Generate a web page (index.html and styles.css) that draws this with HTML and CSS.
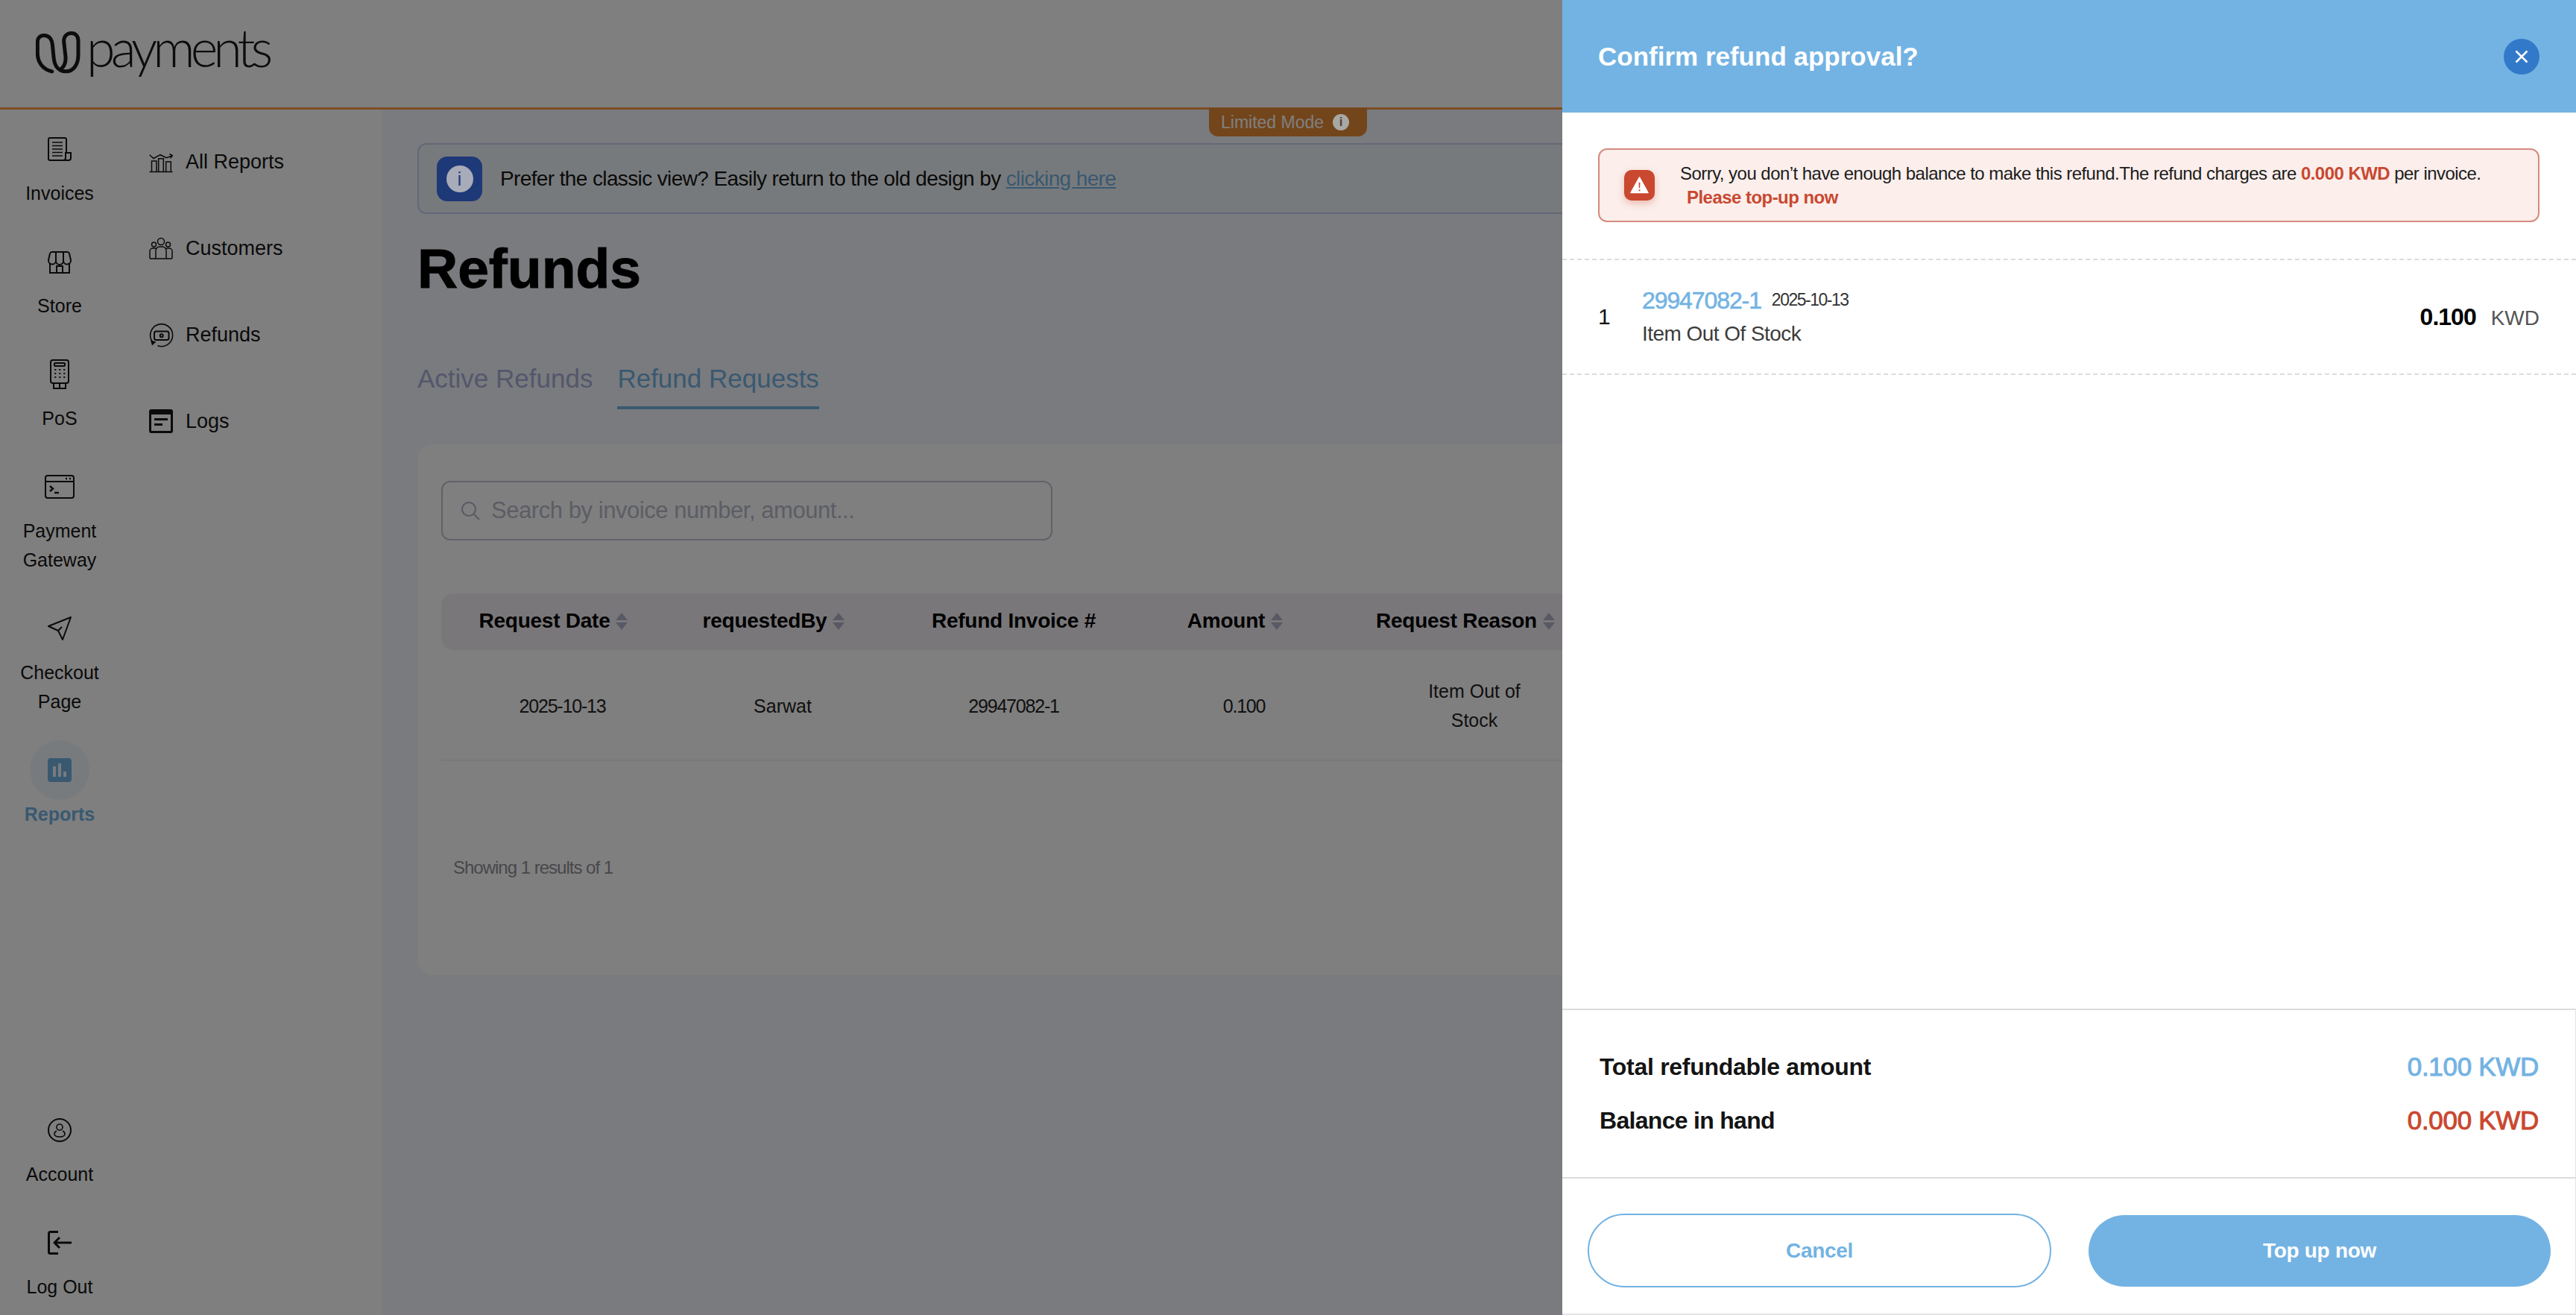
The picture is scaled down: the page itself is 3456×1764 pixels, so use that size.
FILE: index.html
```html
<!DOCTYPE html>
<html lang="en">
<head>
<meta charset="utf-8">
<title>Refunds</title>
<link rel="stylesheet" href="styles.css">
</head>
<body>
<div class="app">
  <header class="topbar">
    <div class="logo">
      <svg class="logo-mark" viewBox="85 72 180 170" fill="none" stroke="currentColor" stroke-width="15" stroke-linecap="round"><path d="M150 233C112 224 92 195 92 160L92 115C92 98 103 88 118 88C140 88 150 105 152 125L157 175C160 215 180 233 205 233C238 233 256 205 256 165L256 110C256 90 245 79 228 79C210 79 198 92 198 112L205 175C206 195 200 212 188 222"/></svg>
      <span class="logo-word">payments</span>
    </div>
  </header>
  <div class="shell">
    <nav class="rail">
      <div class="rail-group">
        <a class="rail-item">
          <svg class="ico" viewBox="0 0 32 32" fill="none" stroke="currentColor" stroke-width="2"><path d="M25 21V3a2 2 0 0 0-2-2H3a2 2 0 0 0-2 2v26a2 2 0 0 0 2 2h25a3 3 0 0 0 3-3v-7H24v7a3 3 0 0 1-3 3"/><path d="M6 7h14M6 11.500h14M6 16h14M6 20.500h14M6 25h14" stroke-width="1.600"/></svg>
          <span>Invoices</span>
        </a>
        <a class="rail-item">
          <svg class="ico" viewBox="0 0 32 32" fill="none" stroke="currentColor" stroke-width="2"><path d="M6 3h20a3 3 0 0 1 3 2l2 9a5 5 0 0 1-10 1 5 5 0 0 1-10 0 5 5 0 0 1-10-1l2-9a3 3 0 0 1 3-2z"/><path d="M11 3v12M21 3v12M3 19v12h26V19M12 31v-9h8v9"/></svg>
          <span>Store</span>
        </a>
        <a class="rail-item">
          <svg class="ico ico-tall" viewBox="0 0 32 40" fill="none" stroke="currentColor" stroke-width="2"><rect x="4" y="1" width="24" height="31" rx="3"/><rect x="9" y="5" width="14" height="4" rx="1"/><path d="M8 32v7h16v-7M16 32v7"/><path d="M10 14h.5M16 14h.5M22 14h.5M10 19h.5M16 19h.5M22 19h.5M10 24h.5M16 24h.5M22 24h.5" stroke-linecap="round"/></svg>
          <span>PoS</span>
        </a>
        <a class="rail-item">
          <svg class="ico ico-wide" viewBox="0 0 40 32" fill="none" stroke="currentColor" stroke-width="2"><rect x="1" y="1" width="38" height="30" rx="3"/><path d="M1 9h38"/><path d="M28 5h2M33 5h2" stroke-width="2.400"/><path d="M7 15l4 3.500-4 3.500" stroke-width="2.400"/><path d="M13 24h6" stroke-width="2.400"/></svg>
          <span>Payment Gateway</span>
        </a>
        <a class="rail-item">
          <svg class="ico" viewBox="0 0 32 32" fill="none" stroke="currentColor" stroke-width="2" stroke-linejoin="round"><path d="M31 1L1 13l13 6 6 12z"/><path d="M14 19l5-5"/></svg>
          <span>Checkout Page</span>
        </a>
        <a class="rail-item rail-item-active">
          <svg class="ico" viewBox="0 0 32 32"><rect width="32" height="32" rx="4" fill="#73b3e3"/><path d="M7 11h4v14H7zM14 7h4v18h-4zM21 18h4v7h-4z" fill="#f1f7fc"/></svg>
          <span>Reports</span>
        </a>
      </div>
      <div class="rail-group">
        <a class="rail-item">
          <svg class="ico" viewBox="0 0 32 32" fill="none" stroke="currentColor" stroke-width="2"><circle cx="16" cy="16" r="15"/><circle cx="16" cy="12" r="4" stroke-width="1.600"/><path d="M12 17c-2 1-3 3-3 4 0 3 4 4 7 4s7-1 7-4c0-1-1-3-3-4" stroke-width="1.600"/></svg>
          <span>Account</span>
        </a>
        <a class="rail-item">
          <svg class="ico" viewBox="0 0 32 32" fill="none" stroke="currentColor" stroke-width="3" stroke-linejoin="round"><path d="M14 1.500H3.500a2 2 0 0 0-2 2v25a2 2 0 0 0 2 2H14"/><path d="M32 16H9M16 9l-7 7 7 7"/></svg>
          <span>Log Out</span>
        </a>
      </div>
    </nav>
    <nav class="subnav">
      <a class="sub-item">
        <svg class="ico" viewBox="0 0 32 32" fill="none" stroke="currentColor" stroke-width="1.500"><path d="M.5 29.500h31"/><path d="M.7 6.700L6 11.500l9-4.800 8.300 4 7.500-2.700"/><path d="M27.500 5.500l3.800 2.300-2.700 3.600"/><path d="M3.500 29.500V15h6.500v14.500M12.700 29.500V11.700h6.600v17.800M22.700 29.500V16h6.600v13.500"/></svg>
        <span>All Reports</span>
      </a>
      <a class="sub-item">
        <svg class="ico" viewBox="0 0 32 32" fill="none" stroke="currentColor" stroke-width="1.500"><circle cx="16" cy="7" r="4.500"/><circle cx="6.500" cy="11" r="3"/><circle cx="25.500" cy="11" r="3"/><path d="M9 30V19a5 5 0 0 1 5-5h4a5 5 0 0 1 5 5v11zM9 30H2a1.500 1.500 0 0 1-1-1.500V20a4 4 0 0 1 4-4h4M23 30h7a1.500 1.500 0 0 0 1-1.500V20a4 4 0 0 0-4-4h-4"/></svg>
        <span>Customers</span>
      </a>
      <a class="sub-item">
        <svg class="ico" viewBox="0 0 32 32" fill="none" stroke="currentColor" stroke-width="1.600"><path d="M11.500 30.800A15 15 0 1 0 4.500 25.500"/><path d="M2 23.500l7.500 2-5.500 5z" fill="currentColor" stroke="none"/><rect x="7" y="11.500" width="19.500" height="11.500" rx="2.500" stroke-width="2"/><circle cx="16.700" cy="17.200" r="2" stroke-width="2"/></svg>
        <span>Refunds</span>
      </a>
      <a class="sub-item">
        <svg class="ico" viewBox="0 0 32 32"><path fill="currentColor" fill-rule="evenodd" d="M3 0h26a3 3 0 0 1 3 3v26a3 3 0 0 1-3 3H3a3 3 0 0 1-3-3V3a3 3 0 0 1 3-3zM3 7v22h26V7z"/><path fill="currentColor" d="M7 12h18v3H7zM7 19h11v3H7z"/></svg>
        <span>Logs</span>
      </a>
    </nav>
    <main class="main">
      <div class="mode-badge">Limited Mode <span class="mode-info">i</span></div>
      <div class="banner">
        <span class="banner-icon"><span>i</span></span>
        <p class="banner-text">Prefer the classic view? Easily return to the old design by <a class="banner-link">clicking here</a></p>
      </div>
      <h1 class="title">Refunds</h1>
      <div class="tabs">
        <a class="tab">Active Refunds</a>
        <a class="tab tab-active">Refund Requests</a>
      </div>
      <section class="card">
        <label class="search">
          <svg class="search-ico" viewBox="0 0 26 26" fill="none" stroke="currentColor" stroke-width="2"><circle cx="11" cy="11" r="9"/><path d="M18 18l7 7"/></svg>
          <input class="search-input" placeholder="Search by invoice number, amount...">
        </label>
        <table class="table">
          <thead>
            <tr>
              <th><span class="th-sort">Request Date<i class="sort"></i></span></th>
              <th><span class="th-sort">requestedBy<i class="sort"></i></span></th>
              <th>Refund Invoice #</th>
              <th><span class="th-sort">Amount<i class="sort"></i></span></th>
              <th><span class="th-sort">Request Reason<i class="sort"></i></span></th>
              <th></th>
            </tr>
          </thead>
          <tbody>
            <tr>
              <td class="num">2025-10-13</td>
              <td>Sarwat</td>
              <td class="num">29947082-1</td>
              <td class="num">0.100</td>
              <td>Item Out of<br>Stock</td>
              <td></td>
            </tr>
          </tbody>
        </table>
        <p class="results">Showing 1 results of 1</p>
      </section>
    </main>
  </div>
</div>
<div class="backdrop"></div>
<aside class="drawer">
  <header class="drawer-head">
    <h2 class="drawer-title">Confirm refund approval?</h2>
    <button class="close"><svg viewBox="0 0 16 16" fill="none" stroke="currentColor" stroke-width="2"><path d="M2 2l12 12M14 2L2 14"/></svg></button>
  </header>
  <div class="drawer-body">
    <div class="alert">
      <span class="alert-icon"><svg viewBox="0 0 26 24"><path fill="#fff" d="M13 1L25 22.500H1z" stroke="#fff" stroke-width="1.500" stroke-linejoin="round"/><path fill="#c9482f" d="M12 8h2l-.3 8h-1.400zM12 18h2v2h-2z"/></svg></span>
      <div class="alert-text">
        <p>Sorry, you don’t have enough balance to make this refund.The refund charges are <b>0.000 KWD</b> per invoice.</p>
        <p class="alert-cta">Please top-up now</p>
      </div>
    </div>
    <div class="refund-item">
      <span class="refund-index">1</span>
      <div class="refund-main">
        <div class="refund-line"><a class="refund-no">29947082-1</a><span class="refund-date">2025-10-13</span></div>
        <div class="refund-reason">Item Out Of Stock</div>
      </div>
      <div class="refund-amount"><b>0.100</b><span>KWD</span></div>
    </div>
  </div>
  <div class="summary">
    <div class="summary-row"><span class="sum-a">Total refundable amount</span><strong class="val-blue">0.100 KWD</strong></div>
    <div class="summary-row"><span class="sum-b">Balance in hand</span><strong class="val-red">0.000 KWD</strong></div>
  </div>
  <footer class="drawer-foot">
    <button class="btn btn-outline">Cancel</button>
    <button class="btn btn-solid">Top up now</button>
  </footer>
</aside>
</body>
</html>
```

FILE: styles.css
```css
* { box-sizing: border-box; }
html, body { margin: 0; height: 100%; }
body {
  position: relative;
  width: 3456px;
  height: 1764px;
  overflow: hidden;
  font-family: "Liberation Sans", Arial, sans-serif;
  color: #141414;
  background: #fff;
}
p, h1, h2 { margin: 0; }

.app { display: flex; flex-direction: column; height: 100%; }

.topbar {
  flex: none;
  height: 147px;
  padding-left: 48px;
  display: flex;
  align-items: center;
  border-bottom: 3px solid #fd9d47;
  background: #fff;
}
.logo { display: flex; align-items: center; gap: 8px; color: #181818; margin-top: -3px; }
.logo-mark { width: 60px; height: 57px; }
.logo-word { font-family: Lato, sans-serif; font-weight: 300; font-size: 70px; line-height: 1; letter-spacing: -5.9px; margin-top: -15px; }

.shell { flex: 1; display: flex; min-height: 0; }

.rail {
  flex: none;
  width: 160px;
  padding: 37px 0 18px;
  display: flex;
  flex-direction: column;
  justify-content: space-between;
  background: #fff;
}
.rail-group { display: flex; flex-direction: column; gap: 56px; }
.rail-item {
  position: relative;
  display: flex;
  flex-direction: column;
  align-items: center;
  gap: 24px;
  font-size: 25px;
  line-height: 39px;
  text-align: center;
  color: #141414;
  padding: 0 20px;
}
.rail-item-active { color: #73b3e3; font-weight: 700; }
.rail-item-active::before {
  content: "";
  position: absolute;
  top: -24px;
  left: 40px;
  width: 80px;
  height: 80px;
  border-radius: 50%;
  background: #f1f7fc;
}
.ico { position: relative; width: 32px; height: 32px; flex: none; display: block; overflow: visible; }
.ico-wide { width: 40px; }
.ico-tall { height: 40px; margin: -4px 0; }

.subnav {
  flex: none;
  width: 352px;
  padding: 52px 0 0 40px;
  display: flex;
  flex-direction: column;
  gap: 80px;
  background: #fff;
}
.sub-item { display: flex; align-items: center; gap: 17px; height: 36px; font-size: 27px; color: #141414; }

.main {
  flex: 1;
  position: relative;
  min-width: 0;
  padding: 45px 48px 0;
  background: #f4f6fc;
}
.mode-badge {
  position: absolute;
  top: -2px;
  left: 1110px;
  width: 212px;
  height: 38px;
  padding-left: 16px;
  display: flex;
  align-items: center;
  gap: 12px;
  font-size: 23px;
  color: #fff;
  background: #e68a36;
  border-radius: 0 0 12px 12px;
}
.mode-info {
  position: relative;
  z-index: 10;
  width: 22px; height: 22px;
  border-radius: 50%;
  background: #a8a8a4;
  color: #5a4030;
  font-size: 17px;
  font-weight: 700;
  line-height: 22px;
  text-align: center;
}
.banner {
  height: 95px;
  padding-left: 24px;
  display: flex;
  align-items: center;
  gap: 24px;
  border: 2px solid #cbcdee;
  border-radius: 12px;
  background: #eff4f9;
}
.banner-icon {
  width: 61px; height: 60px;
  border-radius: 14px;
  background: #3d72f0;
  display: flex; align-items: center; justify-content: center;
}
.banner-icon span {
  position: relative;
  z-index: 10;
  width: 36px; height: 36px;
  border-radius: 50%;
  background: #a8acb8;
  color: #24407f;
  font-size: 26px;
  line-height: 36px;
  text-align: center;
}
.banner-text { font-size: 28px; letter-spacing: -.62px; }
.banner-link { color: #73b3e3; text-decoration: underline; }

.title { margin-top: 37px; font-size: 75px; line-height: 72px; font-weight: 700; color: #000; -webkit-text-stroke: 1px #000; }

.tabs { margin-top: 90px; display: flex; gap: 33px; }
.tab { font-size: 35px; line-height: 44px; padding-bottom: 15px; border-bottom: 4px solid transparent; color: #a9aed8; }
.tab-active { color: #73b3e3; border-bottom-color: #73b3e3; }

.card {
  margin-top: 47px;
  height: 712px;
  padding: 49px 33px 0 32px;
  border-radius: 20px;
  background: #fff;
}
.search {
  width: 820px;
  height: 80px;
  padding-left: 24px;
  display: flex;
  align-items: center;
  gap: 15px;
  border: 2px solid #c2c4d2;
  border-radius: 12px;
  color: #aeb0c4;
}
.search-ico { width: 26px; height: 26px; flex: none; }
.search-input {
  flex: 1;
  border: 0;
  outline: 0;
  padding: 0;
  background: none;
  font: 31px "Liberation Sans", Arial, sans-serif;
  letter-spacing: -.45px;
}
.search-input::placeholder { color: #b9bacb; opacity: 1; }

.table {
  margin-top: 71px;
  width: 100%;
  border-collapse: collapse;
  table-layout: fixed;
}
.table th:nth-child(1) { width: 325px; }
.table th:nth-child(2) { width: 266px; }
.table th:nth-child(3) { width: 354px; }
.table th:nth-child(4) { width: 264px; }
.table th:nth-child(5) { width: 354px; }
.table th {
  height: 76px;
  padding: 0 0 2px;
  font-size: 28px;
  font-weight: 700;
  letter-spacing: -.25px;
  color: #000;
  background: #f2eff4;
}
.table th:first-child { border-radius: 16px 0 0 16px; }
.table th:last-child { border-radius: 0 16px 16px 0; }
.table td {
  height: 148px;
  padding: 3px 0 0;
  text-align: center;
  font-size: 25px;
  line-height: 39px;
  color: #222;
  border-bottom: 2px solid #f0f0f2;
}
.table td.num { letter-spacing: -1.2px; }
.th-sort { display: inline-flex; align-items: center; gap: 8px; margin-right: 24px; }
.sort { display: inline-flex; flex-direction: column; gap: 3px; }
.sort::before, .sort::after { content: ""; width: 0; height: 0; border-left: 8px solid transparent; border-right: 8px solid transparent; }
.sort::before { border-bottom: 10px solid #b1b3c9; }
.sort::after { border-top: 10px solid #b1b3c9; }
.results { margin-top: 125px; padding-left: 16px; font-size: 24px; line-height: 36px; letter-spacing: -1px; color: #8e8f96; }

.backdrop {
  position: absolute;
  inset: 0;
  z-index: 5;
  background: rgba(0, 0, 0, .5);
}

.drawer {
  position: absolute;
  top: 0;
  right: 0;
  bottom: 0;
  z-index: 11;
  width: 1360px;
  display: flex;
  flex-direction: column;
  background: #fff;
}
.drawer-head {
  flex: none;
  height: 151px;
  padding: 0 49px 0 48px;
  display: flex;
  align-items: center;
  justify-content: space-between;
  background: #73b3e3;
}
.drawer-title { font-size: 35px; font-weight: 700; color: #fff; }
.close {
  width: 48px; height: 48px;
  padding: 14px;
  border: 0;
  border-radius: 50%;
  background: #3279c9;
  color: #fff;
}
.close svg { display: block; width: 20px; height: 20px; }
.drawer-body { flex: 1; padding-top: 48px; min-height: 0; }
.alert {
  margin: 0 49px 0 48px;
  height: 99px;
  padding-left: 33px;
  display: flex;
  align-items: center;
  gap: 34px;
  border: 2px solid #d48b7d;
  border-radius: 12px;
  background: #fbeeeb;
}
.alert-icon {
  flex: none;
  width: 41px; height: 41px;
  padding: 8px;
  border-radius: 10px;
  background: #c9482f;
  box-shadow: 0 4px 10px rgba(201, 72, 47, .3);
}
.alert-icon svg { display: block; width: 25px; height: 25px; }
.alert-text { font-size: 24px; line-height: 32px; letter-spacing: -.54px; color: #1c1c1c; }
.alert-text b { color: #c9482f; }
.alert-cta { padding-left: 9px; font-weight: 700; color: #c9482f; }
.refund-item {
  margin-top: 49px;
  height: 156px;
  padding: 0 49px 0 48px;
  display: flex;
  align-items: center;
  border-top: 2px dashed #dcdcdc;
  border-bottom: 2px dashed #dcdcdc;
}
.refund-index { width: 59px; font-size: 30px; letter-spacing: -2px; }
.refund-main { flex: 1; }
.refund-line { display: flex; align-items: center; gap: 14px; }
.refund-no { font-size: 32px; line-height: 44px; color: #73b3e3; letter-spacing: -1.1px; -webkit-text-stroke: .6px #73b3e3; }
.refund-date { font-size: 23px; color: #333; letter-spacing: -1.5px; }
.refund-reason { margin-top: 1px; font-size: 28px; line-height: 44px; color: #3c3c3c; letter-spacing: -.55px; }
.refund-amount { display: flex; align-items: baseline; gap: 20px; }
.refund-amount b { font-size: 32px; color: #000; letter-spacing: -1px; }
.refund-amount span { font-size: 28px; color: #555; }
.summary {
  flex: none;
  height: 226px;
  padding: 0 49px 0 50px;
  display: flex;
  flex-direction: column;
  justify-content: center;
  gap: 32px;
  border-top: 2px solid #dcdcdc;
  border-right: 1px solid #e4e4e4;
}
.summary-row { display: flex; justify-content: space-between; align-items: center; height: 40px; font-size: 32px; font-weight: 700; color: #141414; }
.sum-a { letter-spacing: -.3px; }
.sum-b { letter-spacing: -.7px; }
.summary-row strong { font-size: 35px; font-weight: 400; letter-spacing: -.3px; -webkit-text-stroke: 1px currentColor; }
.val-blue { color: #73b3e3; }
.val-red { color: #c9482f; }
.drawer-foot {
  flex: none;
  height: 185px;
  padding: 47px 33px 0 34px;
  display: flex;
  align-items: flex-start;
  justify-content: space-between;
  border-top: 2px solid #dcdcdc;
  border-right: 1px solid #e4e4e4;
  border-bottom: 2px solid #e4e4e4;
}
.btn {
  width: 622px;
  height: 99px;
  border-radius: 50px;
  font: 700 28px "Liberation Sans", Arial, sans-serif;
  letter-spacing: -.3px;
}
.btn-outline { background: #fff; border: 2px solid #73b3e3; color: #73b3e3; }
.btn-solid { width: 620px; height: 96px; margin-top: 2px; background: #73b3e3; border: 0; color: #fff; }
```
